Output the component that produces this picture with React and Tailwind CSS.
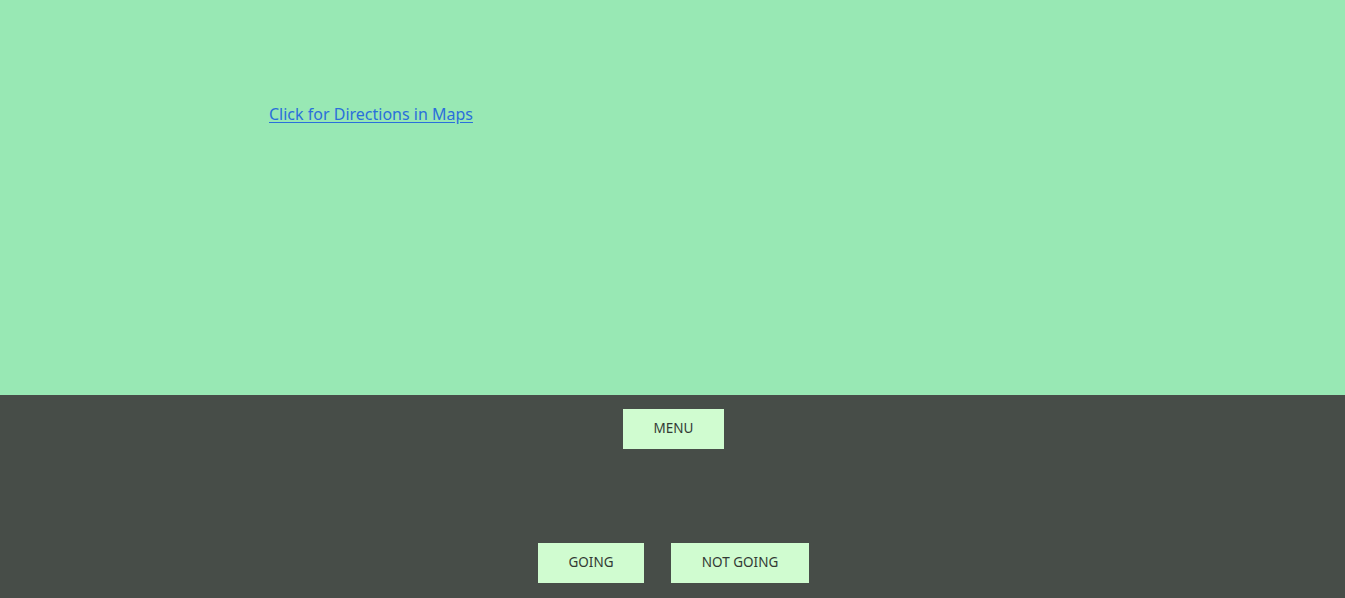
export default function App() {
  const font = { fontFamily: '"Segoe UI", "Noto Sans", "Open Sans", sans-serif' };
  return (
    <div className="w-[1345px] h-[598px] flex flex-col overflow-hidden" style={font}>
      <div className="h-[395px] bg-[#98e8b4] pl-[269px] pt-[102px]">
        <a href="#" className="text-[16px] leading-[22px] text-[#2a6fdb] underline underline-offset-2">
          Click for Directions in Maps
        </a>
      </div>
      <div className="flex-1 bg-[#474d48] flex flex-col items-center pt-[14px]">
        <button className="ml-[2px] w-[101px] h-[40px] pb-[1px] bg-[#d0fcd0] text-[13.5px] text-[#333a35]">MENU</button>
        <div className="flex gap-[27px] mt-[94px] ml-[2px]">
          <button className="w-[106px] h-[40px] pb-[1px] bg-[#d0fcd0] text-[13.5px] text-[#333a35]">GOING</button>
          <button className="w-[138px] h-[40px] pb-[1px] bg-[#d0fcd0] text-[13.5px] text-[#333a35]">NOT GOING</button>
        </div>
      </div>
    </div>
  );
}
